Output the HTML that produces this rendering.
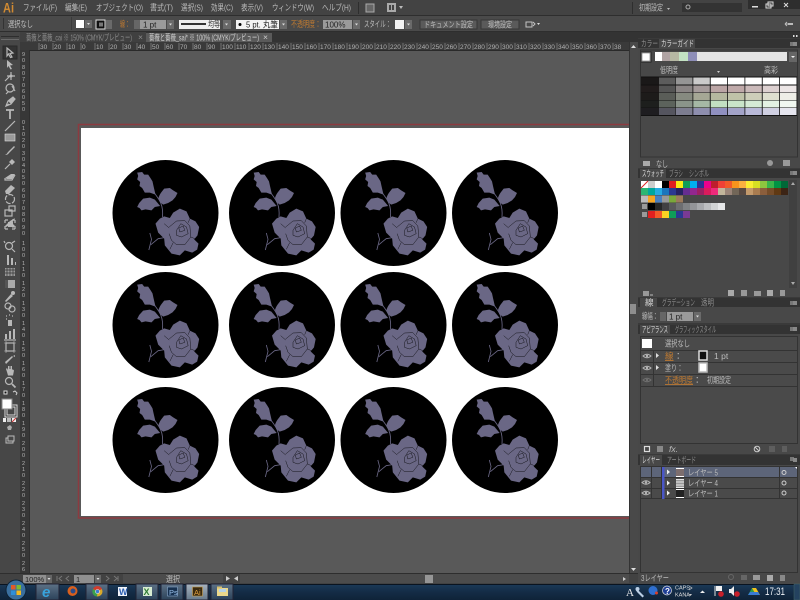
<!DOCTYPE html>
<html><head><meta charset="utf-8"><style>
html,body{margin:0;padding:0;background:#595959;width:800px;height:600px;overflow:hidden}
svg{display:block}
text{font-family:"Liberation Sans","Noto Sans CJK JP",sans-serif;font-size:8.5px;fill:#bcbcbc;white-space:pre}
.d{fill:#8d8d8d}.o{fill:#c07a30}.r{font-size:6.5px;fill:#b0b0b0}.v{font-size:5.5px;fill:#b4b4b4}
.s rect{width:7px;height:7px}
.g rect{width:16.5px;height:7px}
.t path,.t rect,.t circle{stroke:#b8b8b8;fill:none;stroke-width:1.2}
.t .f{fill:#b8b8b8;stroke:none}
</style></head><body>
<svg width="800" height="600" viewBox="0 0 800 600" xmlns="http://www.w3.org/2000/svg">
<defs>
<g id="rose">
<circle cx="182" cy="173" r="159" fill="#000"/>
<g fill="#6a6785">
<path d="M97 52L112 50L118 58L130 58L138 70L143 78L146 92L152 118L135 112L120 112L112 98L104 92L106 80L97 72L100 62Z"/>
<path d="M161 128C165 115 172 108 178 100L195 98L205 105L218 113L212 125L203 135L190 143L175 148L165 140Z"/>
<path d="M97 155L103 143L115 130L135 127L150 133L166 152L150 155L140 165L122 162L110 165L104 158Z"/>
<path d="M152 205L165 190L178 183L195 188L205 172L225 160L245 168L255 190L272 198L283 215L278 240L268 252L281 265L277 283L262 292L240 285L225 300L200 295L180 270L178 250L160 232Z"/>
</g>
<g fill="none" stroke="#6a6785" stroke-width="2.5">
<path d="M150 115C165 135 176 150 173 185"/>
<path d="M132 284L140 252L135 233M138 268L160 250L190 245"/>
</g>
<g fill="none" stroke="#000" stroke-width="1.2">
<path d="M193 215L215 197L240 196L255 212L258 245L240 268L215 268L200 255L193 235"/>
<path d="M215 225L228 205L245 215L250 235L230 245L215 240Z"/>
<path d="M222 218L235 212L240 225L225 230Z"/>
<path d="M205 262L195 282M255 190L250 202M178 205L193 218M258 245L275 252"/>
</g>
</g>
<g id="eye"><path d="M-4 0Q0 -3.5 4 0Q0 3.5 -4 0Z" fill="none" stroke="#b5b5b5"/><circle r="1.2" fill="#b5b5b5"/></g>
</defs>

<!-- menu bar -->
<rect width="800" height="16" fill="#434343"/>
<rect y="15" width="800" height="1" fill="#2e2e2e"/>
<text x="3" y="12.500" textLength="11" lengthAdjust="spacingAndGlyphs" style="font-size:14px;font-weight:bold;fill:#d08a32">Ai</text>
<text x="23" y="10.500" textLength="34" lengthAdjust="spacingAndGlyphs">ファイル(F)</text>
<text x="65" y="10.500" textLength="22" lengthAdjust="spacingAndGlyphs">編集(E)</text>
<text x="96" y="10.500" textLength="47" lengthAdjust="spacingAndGlyphs">オブジェクト(O)</text>
<text x="150" y="10.500" textLength="23" lengthAdjust="spacingAndGlyphs">書式(T)</text>
<text x="181" y="10.500" textLength="22" lengthAdjust="spacingAndGlyphs">選択(S)</text>
<text x="211" y="10.500" textLength="22" lengthAdjust="spacingAndGlyphs">効果(C)</text>
<text x="241" y="10.500" textLength="22" lengthAdjust="spacingAndGlyphs">表示(V)</text>
<text x="272" y="10.500" textLength="42" lengthAdjust="spacingAndGlyphs">ウィンドウ(W)</text>
<text x="322" y="10.500" textLength="29" lengthAdjust="spacingAndGlyphs">ヘルプ(H)</text>
<rect x="358" y="2" width="1" height="12" fill="#2e2e2e"/>
<rect x="366" y="4" width="8" height="8" fill="#666" stroke="#aaa"/>
<rect x="387" y="3" width="9" height="9" fill="#aaa"/><rect x="389" y="5" width="2" height="5" fill="#444"/><rect x="392" y="5" width="2" height="5" fill="#444"/>
<path d="M399 6h4l-2 3z" fill="#bbb"/>
<rect x="632" y="2" width="1" height="12" fill="#2e2e2e"/>
<text x="639" y="10.500" textLength="24" lengthAdjust="spacingAndGlyphs">初期設定</text><path d="M667 8h3l-1.500 2z" fill="#bbb"/>
<rect x="682" y="3" width="60" height="9" fill="#333"/><circle cx="688" cy="7" r="2" fill="none" stroke="#aaa"/>
<rect x="748" y="0" width="52" height="9" fill="#2e2e2e"/>
<rect x="752" y="6" width="6" height="1.500" fill="#ddd"/>
<rect x="766" y="4" width="5" height="4" fill="none" stroke="#ddd"/><rect x="768" y="2" width="5" height="4" fill="none" stroke="#ddd"/>
<path d="M784 3l4 4m0-4l-4 4" stroke="#ddd" fill="none"/>

<!-- control bar -->
<rect y="16" width="800" height="16" fill="#4a4a4a"/>
<rect y="31" width="800" height="1" fill="#2e2e2e"/>
<rect x="3" y="18" width="1" height="11" fill="#333"/>
<text x="8" y="27" textLength="25" lengthAdjust="spacingAndGlyphs">選択なし</text>
<rect x="71" y="17" width="1" height="13" fill="#3a3a3a"/>
<rect x="76" y="20" width="8" height="8" fill="#fff"/><rect x="85" y="20" width="7" height="8" fill="#6a6a6a"/><path d="M87 23h3l-1.500 2z" fill="#ddd"/>
<rect x="96" y="20" width="9" height="9" fill="#111" stroke="#ddd"/><rect x="99" y="22.500" width="4" height="4" fill="#777"/><rect x="106" y="20" width="6" height="9" fill="#6a6a6a"/>
<text x="120" y="27" class="o" textLength="10" lengthAdjust="spacingAndGlyphs">線：</text>
<rect x="134" y="20" width="6" height="9" fill="#666"/><rect x="140" y="20" width="26" height="9" fill="#9a9a9a"/><text x="143" y="27.500" style="fill:#222;font-size:8px">1 pt</text>
<rect x="167" y="20" width="7" height="9" fill="#6a6a6a"/><path d="M169 23.500h3l-1.500 2z" fill="#ddd"/>
<rect x="179" y="20" width="41" height="9" fill="#eee"/><rect x="181" y="23" width="25" height="2" fill="#333"/>
<text x="208" y="27" textLength="12" lengthAdjust="spacingAndGlyphs" style="fill:#333">均等</text>
<rect x="223" y="20" width="8" height="9" fill="#6a6a6a"/><path d="M225 23.500h3l-1.500 2z" fill="#ddd"/>
<rect x="236" y="20" width="43" height="9" fill="#f2f2f2"/><circle cx="240" cy="24.500" r="1.500" fill="#000"/>
<text x="246" y="27.500" textLength="32" lengthAdjust="spacingAndGlyphs" style="fill:#222">5 pt. 丸筆</text>
<rect x="280" y="20" width="7" height="9" fill="#6a6a6a"/><path d="M282 23.500h3l-1.500 2z" fill="#ddd"/>
<text x="291" y="27" class="o" textLength="30" lengthAdjust="spacingAndGlyphs">不透明度：</text>
<rect x="323" y="20" width="29" height="9" fill="#9a9a9a"/><text x="325" y="27.500" style="fill:#222;font-size:8px">100%</text>
<rect x="353" y="20" width="7" height="9" fill="#6a6a6a"/><path d="M355 23.500h3l-1.500 2z" fill="#ddd"/>
<text x="364" y="27" textLength="27" lengthAdjust="spacingAndGlyphs">スタイル：</text>
<rect x="395" y="20" width="9" height="9" fill="#f2f2f2"/><rect x="405" y="20" width="7" height="9" fill="#6a6a6a"/><path d="M407 23.500h3l-1.500 2z" fill="#ddd"/>
<rect x="420" y="20" width="57" height="9" fill="#5a5a5a" stroke="#373737"/><text x="424" y="27.500" textLength="49" lengthAdjust="spacingAndGlyphs">ドキュメント設定</text>
<rect x="481" y="20" width="38" height="9" fill="#5a5a5a" stroke="#373737"/><text x="488" y="27.500" textLength="24" lengthAdjust="spacingAndGlyphs">環境設定</text>
<path d="M526 22h6v5h-6zM533 22l2 2-2 2" fill="none" stroke="#c4c4c4"/><path d="M537 23h3l-1.500 2z" fill="#ddd"/>
<path d="M785 24h6M785 24l2-2M785 24l2 2" stroke="#bbb" fill="none"/><rect x="788" y="23" width="5" height="2" fill="#bbb"/>

<!-- tab row -->
<rect y="32" width="638" height="10" fill="#333"/>
<rect x="20" y="32" width="126" height="10" fill="#404040"/>
<text x="26" y="40.500" class="d" textLength="106" lengthAdjust="spacingAndGlyphs">薔薇と薔薇_cai ※ 150% (CMYK/プレビュー)</text>
<text x="138" y="40" class="d">×</text>
<rect x="146" y="33" width="126" height="9" fill="#5a5a5a"/>
<text x="149" y="40.500" style="fill:#d0d0d0" textLength="110" lengthAdjust="spacingAndGlyphs">薔薇と薔薇_sai* ※ 100% (CMYK/プレビュー)</text>
<text x="263" y="40" style="fill:#ccc">×</text>

<!-- canvas -->
<rect x="29" y="50" width="600" height="523" fill="#595959"/>
<rect x="78.500" y="124.500" width="560" height="393.500" fill="none" stroke="#8c3a40" stroke-width="1.500"/>
<rect x="81" y="128" width="548" height="388" fill="#fff"/>
<g>
<use href="#rose" transform="translate(165.500 213) scale(.3333) translate(-182 -173)"/>
<use href="#rose" transform="translate(282 213) scale(.3333) translate(-182 -173)"/>
<use href="#rose" transform="translate(393.500 213) scale(.3333) translate(-182 -173)"/>
<use href="#rose" transform="translate(505 213) scale(.3333) translate(-182 -173)"/>
<use href="#rose" transform="translate(165.500 325) scale(.3333) translate(-182 -173)"/>
<use href="#rose" transform="translate(282 325) scale(.3333) translate(-182 -173)"/>
<use href="#rose" transform="translate(393.500 325) scale(.3333) translate(-182 -173)"/>
<use href="#rose" transform="translate(505 325) scale(.3333) translate(-182 -173)"/>
<use href="#rose" transform="translate(165.500 440) scale(.3333) translate(-182 -173)"/>
<use href="#rose" transform="translate(282 440) scale(.3333) translate(-182 -173)"/>
<use href="#rose" transform="translate(393.500 440) scale(.3333) translate(-182 -173)"/>
<use href="#rose" transform="translate(505 440) scale(.3333) translate(-182 -173)"/>
</g>

<!-- top ruler -->
<rect x="20" y="42" width="609" height="8" fill="#3a3a3a"/>
<rect x="20" y="50" width="609" height="1" fill="#2a2a2a"/>
<g>
<text class="r" x="40" y="49">30</text><text class="r" x="54" y="49">20</text><text class="r" x="68" y="49">10</text><text class="r" x="82" y="49">0</text><text class="r" x="96" y="49">10</text><text class="r" x="110" y="49">20</text><text class="r" x="124" y="49">30</text><text class="r" x="138" y="49">40</text><text class="r" x="152" y="49">50</text><text class="r" x="166" y="49">60</text><text class="r" x="180" y="49">70</text><text class="r" x="194" y="49">80</text><text class="r" x="208" y="49">90</text>
<text class="r" x="222" y="49">100</text><text class="r" x="236" y="49">110</text><text class="r" x="250" y="49">120</text><text class="r" x="264" y="49">130</text><text class="r" x="278" y="49">140</text><text class="r" x="292" y="49">150</text><text class="r" x="306" y="49">160</text><text class="r" x="320" y="49">170</text><text class="r" x="334" y="49">180</text><text class="r" x="348" y="49">190</text><text class="r" x="362" y="49">200</text><text class="r" x="376" y="49">210</text><text class="r" x="390" y="49">220</text><text class="r" x="404" y="49">230</text><text class="r" x="418" y="49">240</text><text class="r" x="432" y="49">250</text><text class="r" x="446" y="49">260</text><text class="r" x="460" y="49">270</text><text class="r" x="474" y="49">280</text><text class="r" x="488" y="49">290</text><text class="r" x="502" y="49">300</text><text class="r" x="516" y="49">310</text><text class="r" x="530" y="49">320</text><text class="r" x="544" y="49">330</text><text class="r" x="558" y="49">340</text><text class="r" x="572" y="49">350</text><text class="r" x="586" y="49">360</text><text class="r" x="600" y="49">370</text><text class="r" x="614" y="49">38</text>
</g>
<path d="M39 43v7M53 43v7M67 43v7M81 43v7M95 43v7M109 43v7M123 43v7M137 43v7M151 43v7M165 43v7M179 43v7M193 43v7M207 43v7M221 43v7M235 43v7M249 43v7M263 43v7M277 43v7M291 43v7M305 43v7M319 43v7M333 43v7M347 43v7M361 43v7M375 43v7M389 43v7M403 43v7M417 43v7M431 43v7M445 43v7M459 43v7M473 43v7M487 43v7M501 43v7M515 43v7M529 43v7M543 43v7M557 43v7M571 43v7M585 43v7M599 43v7M613 43v7" stroke="#8a8a8a" stroke-width=".7"/>

<!-- left ruler -->
<rect x="20" y="50" width="9" height="523" fill="#373737"/>
<rect x="29" y="50" width="1" height="523" fill="#2e2e2e"/>
<g>
<text class="v" x="22" y="56">9</text><text class="v" x="22" y="62">0</text>
<text class="v" x="22" y="69">8</text><text class="v" x="22" y="75">0</text>
<text class="v" x="22" y="81">7</text><text class="v" x="22" y="87">0</text>
<text class="v" x="22" y="93">6</text><text class="v" x="22" y="99">0</text>
<text class="v" x="22" y="105">5</text><text class="v" x="22" y="111">0</text>
<text class="v" x="22" y="124">0</text>
<text class="v" x="22" y="130">1</text><text class="v" x="22" y="136">0</text>
<text class="v" x="22" y="142">2</text><text class="v" x="22" y="148">0</text>
<text class="v" x="22" y="155">3</text><text class="v" x="22" y="161">0</text>
<text class="v" x="22" y="167">4</text><text class="v" x="22" y="173">0</text>
<text class="v" x="22" y="179">5</text><text class="v" x="22" y="185">0</text>
<text class="v" x="22" y="192">6</text><text class="v" x="22" y="198">0</text>
<text class="v" x="22" y="204">7</text><text class="v" x="22" y="210">0</text>
<text class="v" x="22" y="216">8</text><text class="v" x="22" y="222">0</text>
<text class="v" x="22" y="229">9</text><text class="v" x="22" y="235">0</text>
</g>
<g>
<text class="v" x="22" y="245">1</text><text class="v" x="22" y="251">0</text><text class="v" x="22" y="257">0</text>
<text class="v" x="22" y="265">1</text><text class="v" x="22" y="271">1</text><text class="v" x="22" y="277">0</text>
<text class="v" x="22" y="285">1</text><text class="v" x="22" y="291">2</text><text class="v" x="22" y="297">0</text>
<text class="v" x="22" y="305">1</text><text class="v" x="22" y="311">3</text><text class="v" x="22" y="317">0</text>
<text class="v" x="22" y="325">1</text><text class="v" x="22" y="331">4</text><text class="v" x="22" y="337">0</text>
<text class="v" x="22" y="345">1</text><text class="v" x="22" y="351">5</text><text class="v" x="22" y="357">0</text>
<text class="v" x="22" y="365">1</text><text class="v" x="22" y="371">6</text><text class="v" x="22" y="377">0</text>
<text class="v" x="22" y="385">1</text><text class="v" x="22" y="391">7</text><text class="v" x="22" y="397">0</text>
<text class="v" x="22" y="405">1</text><text class="v" x="22" y="411">8</text><text class="v" x="22" y="417">0</text>
<text class="v" x="22" y="425">1</text><text class="v" x="22" y="431">9</text><text class="v" x="22" y="437">0</text>
<text class="v" x="22" y="445">2</text><text class="v" x="22" y="451">0</text><text class="v" x="22" y="457">0</text>
<text class="v" x="22" y="465">2</text><text class="v" x="22" y="471">1</text><text class="v" x="22" y="477">0</text>
<text class="v" x="22" y="485">2</text><text class="v" x="22" y="491">2</text><text class="v" x="22" y="497">0</text>
<text class="v" x="22" y="505">2</text><text class="v" x="22" y="511">3</text><text class="v" x="22" y="517">0</text>
<text class="v" x="22" y="525">2</text><text class="v" x="22" y="531">4</text><text class="v" x="22" y="537">0</text>
<text class="v" x="22" y="545">2</text><text class="v" x="22" y="551">5</text><text class="v" x="22" y="557">0</text>
<text class="v" x="22" y="565">2</text><text class="v" x="22" y="571">6</text>
</g>

<!-- toolbar -->
<rect x="0" y="32" width="20" height="541" fill="#474747"/>
<rect x="1" y="36" width="18" height="1" fill="#2e2e2e"/><rect x="1" y="39" width="18" height="1" fill="#6a6a6a"/>
<rect x="3" y="46" width="14" height="13" fill="#333" stroke="#2a2a2a"/>
<g class="t">
<path d="M7 48l6 5-3 .5 2 3.500-1.500.5-2-3.500-1.500 2z"/>
<path class="f" d="M7 60l6 5-3 .5 2 3.500-1.500.5-2-3.500-1.500 2z"/>
<path d="M5 81l6-6M11 72v8M7 76h8"/><circle class="f" cx="11" cy="76" r="1.500"/>
<circle cx="10" cy="88" r="4"/><path d="M8 92l-2 2M12 86l3 5"/>
<path d="M6 106l2-5 5-4 2 2-4 5zM6 106l3-2"/><path class="f" d="M8 101l5-4 2 2-4 5z"/>
<path d="M6 110h8M10 110v9" style="stroke-width:1.800"/>
<path d="M5 131l10-10"/>
<rect x="5" y="134" width="10" height="7" style="fill:#9a9a9a;stroke:#ddd;stroke-width:.6"/>
<path d="M5 155q2-1 3-3l6-6 1 1-6 6q-1 2-4 2z" class="f"/>
<path d="M5 169l5-5"/><path class="f" d="M9 162l3-3 3 3-3 3z"/>
<path class="f" d="M5 178l6-4h4l-3 5h-5z"/><path d="M5 178v2h7l3-5"/>
<path class="f" d="M5 191l6-6 4 3-6 6h-3z"/>
<circle cx="10" cy="199" r="4.500" style="stroke-dasharray:5 1.500"/>
<rect x="5" y="210" width="7" height="6"/><rect x="9" y="206" width="6" height="5"/>
<path class="f" d="M5 226l5-5 5-3 -3 5 3 3-2 2-3-3-4 2z"/>
<path d="M5 220h3M5 220v3M15 220h-3M15 220v3M5 229v-3M5 229h3M15 229h-3M15 229v-3"/><rect class="f" x="8" y="222" width="5" height="5"/>
<circle cx="9" cy="246" r="3.500"/><path d="M12 243l3-2M5 243l-1-2M12 249l3 3"/>
<path class="f" d="M7 255h2v10h-2zM11 258h2v7h-2zM15 262h1v3h-1z"/>
<path class="f" d="M5 268h10v8h-10z" style="fill:#999"/><path d="M7 268v8M10 268v8M13 268v8M5 270h10M5 273h10" style="stroke:#333;stroke-width:.7"/>
<rect class="f" x="5" y="280" width="10" height="8" style="fill:#aaa"/><rect class="f" x="5" y="280" width="3" height="8" style="fill:#555"/>
<path class="f" d="M5 301l6-7 2 2-7 6z"/><circle class="f" cx="13" cy="293" r="2"/>
<circle cx="8" cy="306" r="3"/><circle cx="12" cy="309" r="3"/>
<path class="f" d="M8 320h4v6h-4z"/><path d="M6 316h1M9 315h1M12 316h1M6 319h1" style="stroke-dasharray:1 1"/>
<path class="f" d="M5 339h2v-5h-2zM9 339h2v-8h-2zM13 339h2v-10h-2z"/><path d="M4 340h12"/>
<rect x="6" y="343" width="8" height="8"/><path d="M4 343h12M4 351h12M6 341v12M14 341v12" style="stroke-width:.6"/>
<path class="f" d="M5 362l7-6 1 1-7 7zM13 356l2-1v2z"/>
<path class="f" d="M7 372l-1-3 1-1 1 2v-4h1v3h.5v-3h1v3h.5v-3h1v3.500h1l1 1-1 5h-5z"/>
<circle cx="9" cy="381" r="3.500"/><path d="M12 384l3.500 3.500" style="stroke-width:1.800"/>
</g>
<!-- fill/stroke -->
<path d="M4 391h3v3h-3z" fill="#111" stroke="#ddd"/>
<path d="M13 392l2-1 2 2-1 2" fill="none" stroke="#ccc"/>
<rect x="5" y="405" width="12" height="12" fill="#333" stroke="#ddd"/><rect x="7" y="407" width="8" height="8" fill="#474747" stroke="#ddd"/>
<rect x="2" y="399" width="10" height="10" fill="#fff" stroke="#888"/>
<rect x="3" y="418" width="3" height="4" fill="#eee"/><rect x="7" y="418" width="4" height="4" fill="#bbb"/><rect x="12" y="418" width="4" height="4" fill="#eee"/><path d="M12 422l4-4" stroke="#c33"/>
<path d="M7 427l3-2 2 2-1 3h-3z" fill="#aaa"/>
<rect x="6" y="438" width="7" height="5" fill="none" stroke="#bbb"/><rect x="8" y="436" width="6" height="5" fill="#474747" stroke="#bbb"/>

<!-- v scrollbar -->
<rect x="629" y="42" width="9" height="531" fill="#494949"/>
<rect x="629" y="42" width="1" height="531" fill="#333"/>
<path d="M631 48h5l-2.500-3z" fill="#ddd"/>
<path d="M631 568h5l-2.500 3z" fill="#ddd"/>
<rect x="630" y="304" width="6" height="10" fill="#8e8e8e"/>

<!-- status bar -->
<rect y="573" width="638" height="11" fill="#424242"/>
<rect y="573" width="638" height="1" fill="#2e2e2e"/>
<rect x="23" y="575" width="23" height="8" fill="#8f8f8f"/><text x="25" y="582" style="fill:#222;font-size:7.500px">100%</text>
<rect x="46" y="575" width="6" height="8" fill="#666"/><path d="M47.500 578h3l-1.500 2z" fill="#ddd"/>
<path d="M57 576v5M62 576l-3 2.500 3 2.500M69 576l-3 2.500 3 2.500" stroke="#777" fill="none"/>
<rect x="74" y="575" width="20" height="8" fill="#8f8f8f"/><text x="76" y="582" style="fill:#222;font-size:7.500px">1</text>
<rect x="95" y="575" width="6" height="8" fill="#666"/><path d="M96.500 578h3l-1.500 2z" fill="#ddd"/>
<path d="M106 576l3 2.500-3 2.500M114 576l3 2.500-3 2.500M118 576v5" stroke="#777" fill="none"/>
<rect x="123" y="574" width="100" height="9" fill="#4c4c4c"/>
<text x="166" y="582" textLength="14" lengthAdjust="spacingAndGlyphs">選択</text>
<path d="M226 576l4 2.500-4 2.500z" fill="#ccc"/><path d="M238 576l-4 2.500 4 2.500z" fill="#ccc"/>
<rect x="240" y="574" width="389" height="9" fill="#4c4c4c"/>
<rect x="425" y="575" width="8" height="8" fill="#969696"/>
<path d="M623 577l3 2-3 2z" fill="#ccc"/>

<!-- right dock -->
<rect x="638" y="32" width="162" height="552" fill="#3a3a3a"/>
<rect x="638" y="32" width="162" height="6" fill="#333"/>
<path d="M793 35h1.500v2h-1.500zM796 35h1.500v2h-1.500z" fill="#ddd"/>

<!-- color guide panel -->
<rect x="638" y="39" width="162" height="129" fill="#484848"/>
<rect x="638" y="39" width="162" height="9" fill="#333"/>
<text x="641" y="46.500" class="d" textLength="17" lengthAdjust="spacingAndGlyphs">カラー</text>
<rect x="659" y="39" width="36" height="9" fill="#484848"/>
<text x="661" y="46.500" style="fill:#d8d8d8" textLength="33" lengthAdjust="spacingAndGlyphs">カラーガイド</text>
<path d="M790 43h4M790 45h4" stroke="#bbb"/><rect x="793" y="42" width="4" height="4" fill="#888"/>
<rect x="641" y="52" width="10" height="10" fill="#fff" stroke="#222"/><rect x="642" y="53" width="8" height="8" fill="#fff" stroke="#555" stroke-width=".5"/>
<rect x="655" y="52" width="7" height="9" fill="#fff"/><rect x="662" y="52" width="8" height="9" fill="#b0a3a3"/><rect x="670" y="52" width="9" height="9" fill="#b6b8a3"/><rect x="679" y="52" width="9" height="9" fill="#c3e2c3"/><rect x="688" y="52" width="9" height="9" fill="#8e8eb8"/><rect x="697" y="52" width="90" height="9" fill="#e4e4e4"/>
<rect x="789" y="52" width="8" height="10" fill="#666"/><path d="M791 56h4l-2 2z" fill="#eee"/>
<text x="660" y="73" textLength="18" lengthAdjust="spacingAndGlyphs">低明度</text>
<path d="M717 71h3l-1.500 2z" fill="#ccc"/>
<text x="764" y="73" textLength="14" lengthAdjust="spacingAndGlyphs">高彩</text>
<rect x="640.500" y="76.500" width="156.500" height="39.500" fill="#111"/>
<g class="g">
<rect x="641" y="77.500" style="width:18px" fill="#1a1818"/><rect x="659" y="77.500" fill="#5c5c5c"/><rect x="676" y="77.500" fill="#959595"/><rect x="693.300" y="77.500" fill="#cacaca"/><rect x="710.700" y="77.500" fill="#fff"/><rect x="728" y="77.500" fill="#fff"/><rect x="745.300" y="77.500" fill="#fff"/><rect x="762.700" y="77.500" fill="#fff"/><rect x="780" y="77.500" fill="#fff"/>
<rect x="641" y="85.500" style="width:18px" fill="#211c1c"/><rect x="659" y="85.500" fill="#555"/><rect x="676" y="85.500" fill="#8a8585"/><rect x="693.300" y="85.500" fill="#a59b9b"/><rect x="710.700" y="85.500" fill="#bba5a5"/><rect x="728" y="85.500" fill="#bfa9a9"/><rect x="745.300" y="85.500" fill="#cbbaba"/><rect x="762.700" y="85.500" fill="#dcd0d0"/><rect x="780" y="85.500" fill="#ece6e6"/>
<rect x="641" y="93" style="width:18px" fill="#1d1b1a"/><rect x="659" y="93" fill="#5a5d58"/><rect x="676" y="93" fill="#868a80"/><rect x="693.300" y="93" fill="#a5a795"/><rect x="710.700" y="93" fill="#b5b89f"/><rect x="728" y="93" fill="#bfc2a8"/><rect x="745.300" y="93" fill="#cdceb9"/><rect x="762.700" y="93" fill="#dedfcf"/><rect x="780" y="93" fill="#eeeee7"/>
<rect x="641" y="100.500" style="width:18px" fill="#1d1f1d"/><rect x="659" y="100.500" fill="#5c635c"/><rect x="676" y="100.500" fill="#8a948a"/><rect x="693.300" y="100.500" fill="#a5b8a5"/><rect x="710.700" y="100.500" fill="#c2e0c2"/><rect x="728" y="100.500" fill="#c9e5c9"/><rect x="745.300" y="100.500" fill="#d5ebd5"/><rect x="762.700" y="100.500" fill="#e3f2e3"/><rect x="780" y="100.500" fill="#f1f8f1"/>
<rect x="641" y="108" style="width:18px" fill="#1e1d20"/><rect x="659" y="108" fill="#55555f"/><rect x="676" y="108" fill="#7d7d90"/><rect x="693.300" y="108" fill="#8e8eae"/><rect x="710.700" y="108" fill="#9090c0"/><rect x="728" y="108" fill="#a3a3c8"/><rect x="745.300" y="108" fill="#b9b9d8"/><rect x="762.700" y="108" fill="#d0d0e2"/><rect x="780" y="108" fill="#e6e6ef"/>
</g>
<rect x="640.500" y="50" width="157" height="107" fill="none" stroke="#333"/>
<rect x="643" y="161" width="7" height="5" fill="#aaa"/><text x="656" y="167" textLength="12" lengthAdjust="spacingAndGlyphs">なし</text>
<circle cx="770" cy="163" r="3" fill="#999"/><rect x="783" y="160" width="7" height="6" fill="#999"/>

<!-- swatches panel -->
<rect x="638" y="169" width="162" height="128" fill="#484848"/>
<rect x="638" y="169" width="162" height="9" fill="#333"/>
<rect x="640" y="169" width="26" height="9" fill="#484848"/>
<text x="642" y="176.500" style="fill:#d8d8d8" textLength="22" lengthAdjust="spacingAndGlyphs">スウォッチ</text>
<text x="669" y="176.500" class="d" textLength="14" lengthAdjust="spacingAndGlyphs">ブラシ</text>
<text x="689" y="176.500" class="d" textLength="20" lengthAdjust="spacingAndGlyphs">シンボル</text>
<path d="M790 172h4M790 174h4" stroke="#bbb"/><rect x="793" y="171" width="4" height="4" fill="#888"/>
<g class="s">
<rect x="641" y="181" fill="#fff"/><rect x="648" y="181" fill="#ccc"/><rect x="655" y="181" fill="#fff"/><rect x="662" y="181" fill="#000"/><rect x="669" y="181" fill="#e02020"/><rect x="676" y="181" fill="#f8ec14"/><rect x="683" y="181" fill="#0f9d58"/><rect x="690" y="181" fill="#00aeef"/><rect x="697" y="181" fill="#2e3192"/><rect x="704" y="181" fill="#ec008c"/><rect x="711" y="181" fill="#be1e2d"/><rect x="718" y="181" fill="#ef4136"/><rect x="725" y="181" fill="#f15a29"/><rect x="732" y="181" fill="#f7941d"/><rect x="739" y="181" fill="#fbb040"/><rect x="746" y="181" fill="#f9ed32"/><rect x="753" y="181" fill="#d7df23"/><rect x="760" y="181" fill="#8dc63f"/><rect x="767" y="181" fill="#39b54a"/><rect x="774" y="181" fill="#009444"/><rect x="781" y="181" fill="#006838"/>
<rect x="641" y="188" fill="#2bb673"/><rect x="648" y="188" fill="#00a79d"/><rect x="655" y="188" fill="#27aae1"/><rect x="662" y="188" fill="#1c75bc"/><rect x="669" y="188" fill="#2b3990"/><rect x="676" y="188" fill="#262262"/><rect x="683" y="188" fill="#662d91"/><rect x="690" y="188" fill="#92278f"/><rect x="697" y="188" fill="#9e1f63"/><rect x="704" y="188" fill="#da1c5c"/><rect x="711" y="188" fill="#ee2a7b"/><rect x="718" y="188" fill="#c2b59b"/><rect x="725" y="188" fill="#9b8579"/><rect x="732" y="188" fill="#726658"/><rect x="739" y="188" fill="#594a42"/><rect x="746" y="188" fill="#c49a6c"/><rect x="753" y="188" fill="#a97c50"/><rect x="760" y="188" fill="#8b5e3c"/><rect x="767" y="188" fill="#754c29"/><rect x="774" y="188" fill="#603913"/><rect x="781" y="188" fill="#3c2415"/>
<rect x="641" y="195.500" fill="#bbb"/><rect x="648" y="195.500" fill="#f5a623"/><rect x="655" y="195.500" fill="#4a7fc0"/><rect x="662" y="195.500" fill="#999"/><rect x="669" y="195.500" fill="#7aa83a"/><rect x="676" y="195.500" fill="#9c7a5c"/>
<rect x="648" y="203" fill="#000"/><rect x="655" y="203" fill="#262626"/><rect x="662" y="203" fill="#414042"/><rect x="669" y="203" fill="#58595b"/><rect x="676" y="203" fill="#6d6e71"/><rect x="683" y="203" fill="#808285"/><rect x="690" y="203" fill="#939598"/><rect x="697" y="203" fill="#a7a9ac"/><rect x="704" y="203" fill="#bcbec0"/><rect x="711" y="203" fill="#d1d3d4"/><rect x="718" y="203" fill="#e6e7e8"/>
<rect x="648" y="211" fill="#e02020"/><rect x="655" y="211" fill="#f15a29"/><rect x="662" y="211" fill="#f9d423"/><rect x="669" y="211" fill="#0f9d58"/><rect x="676" y="211" fill="#2b3990"/><rect x="683" y="211" fill="#7a3a94"/>
</g>
<path d="M641 188l7-7" stroke="#d22"/>
<rect x="642" y="204" width="5" height="5" fill="#9a9a9a"/><rect x="642" y="212" width="5" height="5" fill="#9a9a9a"/>
<rect x="789" y="180" width="8" height="108" fill="#404040"/>
<path d="M791 185h4l-2-3zM791 282h4l-2 3z" fill="#aaa"/>
<rect x="643" y="291" width="6" height="5" fill="#999"/><path d="M650 295h3" stroke="#bbb"/>
<rect x="728" y="290" width="6" height="6" fill="#aaa"/><rect x="741" y="290" width="6" height="6" fill="#999"/><rect x="754" y="291" width="7" height="5" fill="#999"/><rect x="767" y="290" width="6" height="6" fill="#aaa"/><rect x="780" y="290" width="5" height="6" fill="#999"/>

<!-- stroke panel -->
<rect x="638" y="298" width="162" height="25" fill="#484848"/>
<rect x="638" y="298" width="162" height="9" fill="#333"/>
<rect x="640" y="298" width="17" height="9" fill="#484848"/>
<text x="645" y="305.500" style="fill:#d8d8d8">線</text>
<text x="662" y="305.500" class="d" textLength="33" lengthAdjust="spacingAndGlyphs">グラデーション</text>
<text x="701" y="305.500" class="d" textLength="13" lengthAdjust="spacingAndGlyphs">透明</text>
<path d="M790 302h4M790 304h4" stroke="#bbb"/><rect x="793" y="301" width="4" height="4" fill="#888"/>
<text x="642" y="319" textLength="16" lengthAdjust="spacingAndGlyphs">線幅：</text>
<rect x="660" y="312" width="6" height="9" fill="#666"/><rect x="667" y="312" width="26" height="9" fill="#9a9a9a"/><text x="669" y="319.500" style="fill:#222;font-size:8px">1 pt</text>
<rect x="694" y="312" width="7" height="9" fill="#6a6a6a"/><path d="M696 315.500h3l-1.500 2z" fill="#ddd"/>

<!-- appearance panel -->
<rect x="638" y="325" width="162" height="129" fill="#484848"/>
<rect x="638" y="325" width="162" height="9" fill="#333"/>
<rect x="640" y="325" width="30" height="9" fill="#484848"/>
<text x="642" y="332.500" style="fill:#d8d8d8" textLength="26" lengthAdjust="spacingAndGlyphs">アピアランス</text>
<text x="675" y="332.500" class="d" textLength="41" lengthAdjust="spacingAndGlyphs">グラフィックスタイル</text>
<path d="M790 328h4M790 330h4" stroke="#bbb"/><rect x="793" y="327" width="4" height="4" fill="#888"/>
<rect x="640.500" y="336.500" width="157" height="107" fill="#4a4a4a" stroke="#333"/>
<rect x="642" y="339" width="10" height="9" fill="#fff"/>
<text x="665" y="346.500" textLength="25" lengthAdjust="spacingAndGlyphs">選択なし</text>
<path d="M641 350.500h156M641 362.500h156M641 374.500h156M641 386.500h156M653.500 350v36" stroke="#333" fill="none"/>
<use href="#eye" transform="translate(647 356)"/>
<use href="#eye" transform="translate(647 368)"/>
<use href="#eye" transform="translate(647 380)" opacity=".35"/>
<path d="M656 353l3 2.500-3 2.500zM656 365l3 2.500-3 2.500z" fill="#ddd"/>
<text x="665" y="359" class="o" style="text-decoration:underline">線</text><text x="674" y="359">：</text>
<rect x="699" y="351" width="8" height="9" fill="#111" stroke="#ddd" stroke-width="1.500"/>
<text x="714" y="359">1 pt</text>
<text x="665" y="371" textLength="18" lengthAdjust="spacingAndGlyphs">塗り：</text>
<rect x="699" y="363" width="8" height="9" fill="#fff" stroke="#bbb" stroke-width="1.500"/>
<text x="665" y="383" class="o" textLength="28" lengthAdjust="spacingAndGlyphs" style="text-decoration:underline">不透明度</text><text x="693" y="383">：</text>
<text x="707" y="383" textLength="24" lengthAdjust="spacingAndGlyphs">初期設定</text>
<rect x="644.500" y="446.500" width="5" height="5" fill="none" stroke="#ddd" stroke-width="1.200"/>
<rect x="657" y="446" width="6" height="6" fill="#888"/>
<text x="669" y="452" textLength="9" lengthAdjust="spacingAndGlyphs" style="font-style:italic">fx.</text>
<circle cx="757" cy="449" r="2.800" fill="none" stroke="#ccc"/><path d="M755 447l4 4" stroke="#ccc"/>
<rect x="769" y="446" width="6" height="6" fill="#5e5e5e"/><rect x="782" y="446" width="5" height="6" fill="#5e5e5e"/>

<!-- layers panel -->
<rect x="638" y="455" width="162" height="129" fill="#484848"/>
<rect x="638" y="455" width="162" height="10" fill="#333"/>
<rect x="640" y="455" width="22" height="10" fill="#484848"/>
<text x="642" y="463" style="fill:#d8d8d8" textLength="18" lengthAdjust="spacingAndGlyphs">レイヤー</text>
<text x="667" y="463" class="d" textLength="29" lengthAdjust="spacingAndGlyphs">アートボード</text>
<path d="M790 458h4M790 460h4" stroke="#bbb"/><rect x="793" y="458" width="4" height="4" fill="#888"/>
<rect x="640.500" y="466.500" width="157" height="106" fill="#4a4a4a" stroke="#333"/>
<rect x="641" y="467" width="156" height="10.500" fill="#5d6579"/>
<path d="M641 477.500h156M641 488.500h156M641 498.500h156M651.500 467v32M661.500 467v32M779.500 467v32" stroke="#333" fill="none"/>
<rect x="662" y="467" width="2.500" height="32" fill="#4a56c8"/>
<path d="M667 469.500l3 2.500-3 2.500zM667 480.500l3 2.500-3 2.500zM667 490.500l3 2.500-3 2.500z" fill="#eee"/>
<rect x="676" y="468" width="8" height="9" fill="#7d6e6e"/><path d="M676 468.500h8M676 476.500h8" stroke="#fff"/>
<rect x="676" y="479" width="8" height="9" fill="#999"/><path d="M676 479.500h8M676 487.500h8M676 482h8M676 485h8" stroke="#fff" stroke-width=".8"/>
<rect x="676" y="489" width="8" height="9" fill="#222"/><path d="M676 489.500h8M676 497.500h8" stroke="#fff"/>
<text x="688" y="475.500" textLength="30" lengthAdjust="spacingAndGlyphs">レイヤー 5</text>
<text x="688" y="486" textLength="30" lengthAdjust="spacingAndGlyphs">レイヤー 4</text>
<text x="688" y="496.500" textLength="30" lengthAdjust="spacingAndGlyphs">レイヤー 1</text>
<circle cx="784" cy="472.500" r="2" fill="none" stroke="#ccc"/><circle cx="784" cy="483" r="2" fill="none" stroke="#ccc"/><circle cx="784" cy="493" r="2" fill="none" stroke="#ccc"/>
<path d="M795 467l2 0 0 2z" fill="#fff"/>
<use href="#eye" transform="translate(646 482.500)"/><use href="#eye" transform="translate(646 493)"/>
<text x="641" y="581" textLength="28" lengthAdjust="spacingAndGlyphs">3レイヤー</text>
<circle cx="731" cy="577" r="2.500" fill="none" stroke="#666"/>
<rect x="741" y="575" width="6" height="5" fill="#666"/><rect x="753" y="575" width="7" height="5" fill="#999"/><rect x="767" y="575" width="6" height="6" fill="#aaa"/><rect x="780" y="575" width="5" height="6" fill="#888"/>

<!-- taskbar -->
<defs><linearGradient id="tb" x1="0" y1="0" x2="0" y2="1"><stop offset="0" stop-color="#1c3a58"/><stop offset=".5" stop-color="#142c46"/><stop offset="1" stop-color="#0f2338"/></linearGradient>
<linearGradient id="btn" x1="0" y1="0" x2="0" y2="1"><stop offset="0" stop-color="#5d7186"/><stop offset="1" stop-color="#2b4259"/></linearGradient>
<linearGradient id="act" x1="0" y1="0" x2="0" y2="1"><stop offset="0" stop-color="#a9b4bf"/><stop offset="1" stop-color="#66798b"/></linearGradient></defs>
<rect y="584" width="800" height="16" fill="url(#tb)"/>
<rect y="584" width="800" height="1" fill="#0a1420"/>
<circle cx="16" cy="590" r="10" fill="#3a6f9e" stroke="#0e2235"/>
<rect x="11" y="585" width="4.500" height="4.500" fill="#e05a28"/><rect x="16.500" y="585" width="4.500" height="4.500" fill="#7eb82e"/><rect x="11" y="590.500" width="4.500" height="4.500" fill="#2f8fd8"/><rect x="16.500" y="590.500" width="4.500" height="4.500" fill="#f2b81e"/>
<rect x="36" y="584" width="23" height="16" fill="url(#btn)" stroke="#223"/>
<text x="42" y="597" style="font-size:15px;font-weight:bold;font-style:italic;fill:#38a3dc">e</text>
<circle cx="72.500" cy="591" r="5" fill="#d8601e"/><circle cx="73" cy="591" r="2.500" fill="#2a4c8c"/>
<rect x="86" y="584" width="22" height="16" fill="url(#btn)" stroke="#223"/>
<circle cx="97.500" cy="591.500" r="5" fill="#d9a92a"/><path d="M97.500 591.500L93 589A5 5 0 0 1 102 589Z" fill="#d33c2e"/><path d="M97.500 591.500L93 589A5 5 0 0 0 97 596.500Z" fill="#3ba14b"/><circle cx="97.500" cy="591.500" r="2" fill="#3a7bd5" stroke="#eee" stroke-width=".6"/>
<rect x="118" y="587" width="9" height="9" fill="#f2f5fa"/><text x="119" y="595" style="font-size:9px;font-weight:bold;fill:#2a5db0">W</text>
<rect x="136" y="584" width="22" height="16" fill="url(#btn)" stroke="#223"/>
<rect x="143" y="587" width="9" height="9" fill="#d8ecd2"/><text x="143.500" y="595" style="font-size:9px;font-weight:bold;fill:#2e7a34">X</text>
<rect x="161" y="584" width="22" height="16" fill="url(#btn)" stroke="#223"/>
<rect x="167.500" y="587" width="10" height="9" fill="#16304f" stroke="#8aa8cc" stroke-width=".6"/><text x="169" y="595" style="font-size:7.500px;fill:#9cc4ee">Ps</text>
<rect x="186" y="584" width="22" height="16" fill="url(#act)" stroke="#223"/>
<rect x="192.500" y="587" width="10" height="9" fill="#3a2a10" stroke="#c9a050" stroke-width=".6"/><text x="194" y="595" style="font-size:7.500px;fill:#e0a040">Ai</text>
<rect x="211" y="584" width="22" height="16" fill="url(#btn)" stroke="#223"/>
<rect x="217" y="588" width="11" height="8" fill="#ecd98c"/><rect x="217" y="586.500" width="5" height="2" fill="#d8c070"/><rect x="219" y="589" width="7" height="3" fill="#b8d4e8"/>
<text x="626" y="596" style="font-family:'Liberation Serif',serif;font-size:11px;fill:#eee">A</text>
<path d="M637 589l2 2 5 5-1.500 1.500-5-5-1.500-2z" fill="#bcd0e6"/><circle cx="637.500" cy="589" r="2" fill="#bcd0e6"/>
<circle cx="653" cy="590.500" r="4.500" fill="#2f6fd0"/><circle cx="656.500" cy="593" r="1.500" fill="#d8402a"/>
<circle cx="667" cy="590.500" r="4.500" fill="#1f3f96" stroke="#ddd" stroke-width=".7"/><text x="665" y="594" style="font-size:8px;font-weight:bold;fill:#fff">?</text>
<text x="675" y="589.500" style="font-size:5.500px;fill:#ddd">CAPS</text><text x="675" y="596.500" style="font-size:5.500px;fill:#ddd">KANA</text>
<path d="M689 586l3 2-3 2" fill="none" stroke="#ccc" stroke-width=".7"/><path d="M689 594h3l-1.500 2z" fill="#ccc"/>
<path d="M700 593h5l-2.500-2.500z" fill="#eee"/>
<path d="M715 586v10" stroke="#ddd"/><path d="M716 586h6v5h-6z" fill="#f2f2f2"/><circle cx="721" cy="594" r="2.800" fill="#c8202a"/>
<path d="M729 589h2l3-3v10l-3-3h-2z" fill="#eee"/><circle cx="737" cy="594" r="2.800" fill="#c8202a"/>
<path d="M748 595l4-7h4l-4 7z" fill="#2c9b4c"/><path d="M752 588h4l4 7h-4z" fill="#f2c21e"/><path d="M748 595h12l-2-3h-8z" fill="#3a7bd5"/>
<text x="765" y="595" style="font-size:11px;fill:#eef2f7" textLength="20" lengthAdjust="spacingAndGlyphs">17:31</text>
<rect x="794" y="584" width="6" height="16" fill="#24425f" stroke="#466" stroke-width=".5"/>
</svg>
</body></html>
